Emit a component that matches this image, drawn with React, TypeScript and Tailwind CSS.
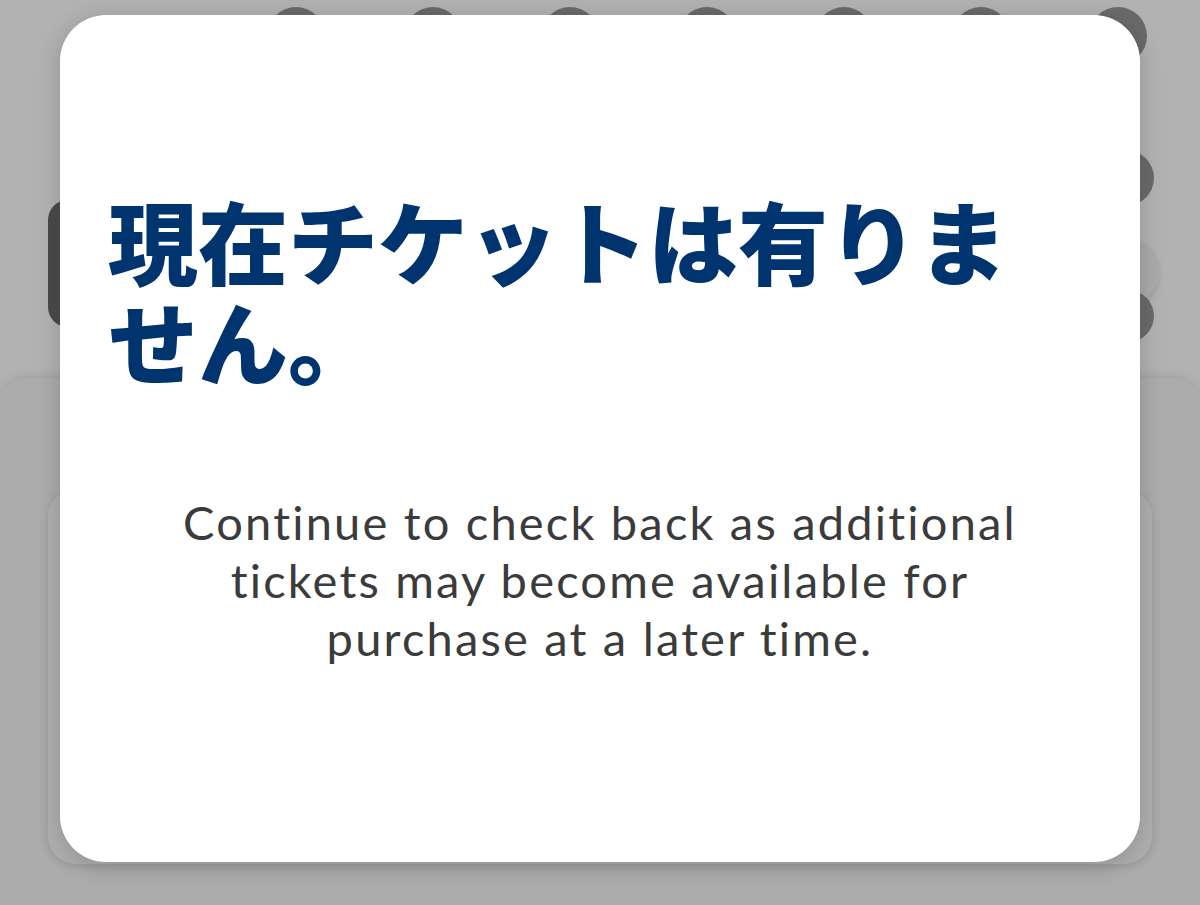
export default function App() {
  const topDots = [0, 1, 2, 3, 4, 5, 6];

  return (
    <div className="relative w-[1200px] h-[905px] overflow-hidden bg-white font-['Lato','Noto_Sans_CJK_JP',sans-serif]">
      {/* Page underneath the dialog */}
      <div className="flex flex-col h-full">
        <div className="flex pt-[7px] pl-[267px] gap-[79px]">
          {topDots.map((i) => (
            <div key={i} className="w-[58px] h-[58px] shrink-0 rounded-full bg-[#999999]" />
          ))}
        </div>

        <div className="flex justify-between h-[313px] pt-[85px]">
          <div className="mt-[50px] ml-[48px] w-[180px] h-[127px] rounded-[20px] bg-[#6a6a6a]" />
          <div className="flex flex-col items-center w-[68px] mr-[40px]">
            <div className="w-[56px] h-[56px] rounded-full bg-[#999999]" />
            <div className="mt-[31px] w-[68px] h-[68px] rounded-full bg-[#f4f4f4] shadow-md" />
            <div className="-mt-[15px] w-[56px] h-[52px] rounded-full bg-[#999999]" />
          </div>
        </div>

        <div className="flex-1 rounded-t-[28px] bg-[#f6f6f6] shadow-[0_-4px_10px_rgba(0,0,0,0.08)] px-[48px] pt-[111px]">
          <div className="h-[375px] rounded-[28px] bg-[#fbfbfb] shadow-[0_2px_10px_rgba(0,0,0,0.12)]" />
        </div>
      </div>

      {/* Dim overlay */}
      <div className="absolute inset-0 bg-black/30" />

      {/* Dialog */}
      <div className="absolute left-[60px] top-[15px] w-[1080px] h-[847px] rounded-[46px] bg-white shadow-[0_4px_24px_rgba(0,0,0,0.18)] px-[48px] pt-[174px]">
        <h1 className="text-[90px] leading-[100px] font-black text-[#00346f] font-['Noto_Sans_CJK_JP',sans-serif]">
          現在チケットは有りません。
        </h1>
        <p className="mt-[104px] px-[56px] text-center text-[47px] leading-[58px] tracking-[2.2px] text-[#3b3b3b]">
          Continue to check back as additional tickets may become available for
          purchase at a later time.
        </p>
      </div>
    </div>
  );
}
